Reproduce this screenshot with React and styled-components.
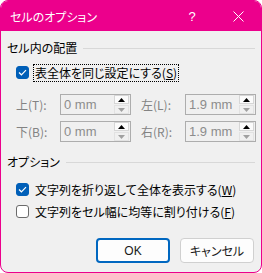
import React, { useState } from 'react';
import styled, { createGlobalStyle } from 'styled-components';

const GlobalStyle = createGlobalStyle`
  html, body {
    margin: 0;
    padding: 0;
    background: #ffffff;
  }
  body {
    font-family: "Noto Sans CJK JP", "Noto Sans", sans-serif;
    font-feature-settings: "palt";
  }
`;

const Dialog = styled.div`
  width: 262px;
  height: 273px;
  box-sizing: border-box;
  border: 1px solid #ec008c;
  border-radius: 8px;
  overflow: hidden;
  background: #f0f0f0;
  display: flex;
  flex-direction: column;
`;

const TitleBar = styled.div`
  height: 30px;
  flex-shrink: 0;
  background: #ec008c;
  color: #ffffff;
  display: flex;
  align-items: center;
  padding-left: 9px;
  font-size: 12px;
`;

const TitleText = styled.div`
  flex: 1;
`;

const TitleButton = styled.div`
  width: 46px;
  height: 30px;
  display: flex;
  align-items: center;
  justify-content: center;
  font-family: "Liberation Sans", sans-serif;
  font-size: 13px;
`;

const Body = styled.div`
  flex: 1;
  display: flex;
  flex-direction: column;
  padding: 9px 6px 0 6px;
  color: #000000;
  font-size: 12px;
`;

const GroupHeader = styled.div`
  display: flex;
  align-items: center;
  gap: 6px;
  height: 16px;
  line-height: 16px;
  &::after {
    content: '';
    flex: 1;
    height: 1px;
    background: #d8d8d8;
  }
`;

const CheckRow = styled.label`
  display: flex;
  align-items: center;
  gap: 4px;
  height: 19px;
  padding-left: 9px;
  margin-top: ${(p) => p.$top}px;
`;

const Box = styled.span`
  width: 13px;
  height: 13px;
  box-sizing: border-box;
  border-radius: 3px;
  flex-shrink: 0;
  display: flex;
  align-items: center;
  justify-content: center;
  background: ${(p) => (p.$checked ? '#005fb8' : '#ffffff')};
  border: 1px solid ${(p) => (p.$checked ? '#005fb8' : '#6b6b6b')};
`;

const CheckLabel = styled.span`
  line-height: 16px;
  padding: 0 1px;
  border: 1px ${(p) => (p.$focus ? 'dotted #000' : 'solid transparent')};
  u {
    text-decoration: underline;
  }
`;

const SpinGrid = styled.div`
  display: grid;
  grid-template-columns: 44px 71px 54px 71px;
  row-gap: 6px;
  align-items: center;
  margin-top: 12px;
  padding-left: 9px;
  color: #838383;
`;

const SpinLabel = styled.div`
  padding-left: ${(p) => p.$indent || 0}px;
`;

const SpinBox = styled.div`
  height: 21px;
  box-sizing: border-box;
  border: 1px solid #adadad;
  display: flex;
  align-items: center;
  padding-left: 3px;
  color: #8c8c8c;
`;

const SpinValue = styled.div`
  flex: 1;
  font-family: "Liberation Sans", sans-serif;
  font-size: 13px;
`;

const SpinButtons = styled.div`
  display: flex;
  flex-direction: column;
  width: 15px;
  margin-right: 1px;
  gap: 1px;
`;

const SpinBtn = styled.div`
  height: 9px;
  box-sizing: border-box;
  display: flex;
  align-items: center;
  justify-content: center;
  background: ${(p) => (p.$active ? '#fbfbfb' : '#f0f0f0')};
  border: 1px solid ${(p) => (p.$active ? '#d6d6d6' : '#e2e2e2')};
`;

const OptionHeader = styled(GroupHeader)`
  margin-top: 12px;
`;

const ButtonRow = styled.div`
  display: flex;
  justify-content: flex-end;
  gap: 10px;
  margin-top: auto;
  margin-bottom: 9px;
  padding-right: 1px;
`;

const Button = styled.button`
  width: 74px;
  height: 25px;
  box-sizing: border-box;
  border-radius: 4px;
  font-family: "Liberation Sans", "Noto Sans CJK JP", sans-serif;
  font-feature-settings: "palt";
  font-weight: 400;
  font-size: 12px;
  color: #1a1a1a;
  background: #fdfdfd;
  border: ${(p) => (p.$primary ? '2px solid #0067c0' : '1px solid #d0d0d0')};
  padding: 0;
  cursor: pointer;
`;

const Arrow = ({ color }) => (
  <svg width="7" height="4" viewBox="0 0 7 4">
    <path d="M0 4 L3.5 0 L7 4 Z" fill={color} />
  </svg>
);

const ArrowDown = ({ color }) => (
  <svg width="7" height="4" viewBox="0 0 7 4">
    <path d="M0 0 L3.5 4 L7 0 Z" fill={color} />
  </svg>
);

const Check = () => (
  <svg width="9" height="7" viewBox="0 0 9 7">
    <path d="M1 3.5 L3.4 5.8 L8 1.2" stroke="#fff" strokeWidth="1.2" fill="none" />
  </svg>
);

const Spinner = ({ value }) => (
  <SpinBox>
    <SpinValue>{value}</SpinValue>
    <SpinButtons>
      <SpinBtn $active>
        <Arrow color="#000" />
      </SpinBtn>
      <SpinBtn>
        <ArrowDown color="#a0a0a0" />
      </SpinBtn>
    </SpinButtons>
  </SpinBox>
);

const App = () => {
  const [same, setSame] = useState(true);
  const [wrap, setWrap] = useState(true);
  const [fit, setFit] = useState(false);

  return (
    <>
      <GlobalStyle />
      <Dialog>
        <TitleBar>
          <TitleText>セルのオプション</TitleText>
          <TitleButton>?</TitleButton>
          <TitleButton>
            <svg width="11" height="11" viewBox="0 0 11 11">
              <path d="M0.5 0.5 L10.5 10.5 M10.5 0.5 L0.5 10.5" stroke="#fff" strokeWidth="1" />
            </svg>
          </TitleButton>
        </TitleBar>
        <Body>
          <GroupHeader>セル内の配置</GroupHeader>
          <CheckRow $top={7} onClick={() => setSame(!same)}>
            <Box $checked={same}>{same && <Check />}</Box>
            <CheckLabel $focus>
              表全体を同じ設定にする(<u>S</u>)
            </CheckLabel>
          </CheckRow>
          <SpinGrid>
            <SpinLabel>上(T):</SpinLabel>
            <Spinner value="0 mm" />
            <SpinLabel $indent={10}>左(L):</SpinLabel>
            <Spinner value="1.9 mm" />
            <SpinLabel>下(B):</SpinLabel>
            <Spinner value="0 mm" />
            <SpinLabel $indent={10}>右(R):</SpinLabel>
            <Spinner value="1.9 mm" />
          </SpinGrid>
          <OptionHeader>オプション</OptionHeader>
          <CheckRow $top={10} onClick={() => setWrap(!wrap)}>
            <Box $checked={wrap}>{wrap && <Check />}</Box>
            <CheckLabel>
              文字列を折り返して全体を表示する(<u>W</u>)
            </CheckLabel>
          </CheckRow>
          <CheckRow $top={3} onClick={() => setFit(!fit)}>
            <Box $checked={fit}>{fit && <Check />}</Box>
            <CheckLabel>
              文字列をセル幅に均等に割り付ける(<u>F</u>)
            </CheckLabel>
          </CheckRow>
          <ButtonRow>
            <Button $primary>OK</Button>
            <Button>キャンセル</Button>
          </ButtonRow>
        </Body>
      </Dialog>
    </>
  );
};

export default App;
